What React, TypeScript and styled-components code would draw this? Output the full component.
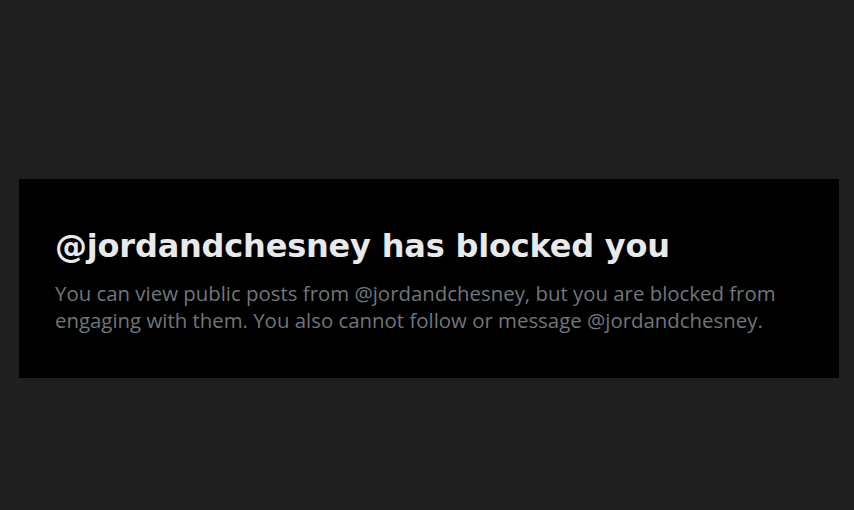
import styled, { createGlobalStyle } from 'styled-components'

const GlobalStyle = createGlobalStyle`
  html, body {
    margin: 0;
    padding: 0;
    background: #1f1f1f;
  }
  body {
    font-family: "Noto Sans", "Open Sans", sans-serif;
  }
`

const Page = styled.div`
  width: 854px;
  height: 510px;
  display: flex;
  align-items: flex-start;
  padding: 179px 15px 0 19px;
  box-sizing: border-box;
`

const Notice = styled.section`
  flex: 1;
  height: 199px;
  background: #000;
  box-sizing: border-box;
  padding: 48px 36px 0 36px;
`

const Title = styled.h2`
  margin: 0;
  font-family: "DejaVu Sans", "Liberation Sans", sans-serif;
  font-weight: 700;
  font-size: 32px;
  line-height: 38px;
  color: #e7e9ea;
  letter-spacing: -0.2px;
`

const Body = styled.p`
  margin: 15px 0 0;
  font-family: "Open Sans", "Noto Sans", sans-serif;
  font-size: 20.4px;
  line-height: 27px;
  color: #71767b;
  max-width: 760px;
`

export default function App() {
  return (
    <>
      <GlobalStyle />
      <Page>
        <Notice>
          <Title>@jordandchesney has blocked you</Title>
          <Body>
            You can view public posts from @jordandchesney, but you are blocked from
            engaging with them. You also cannot follow or message @jordandchesney.
          </Body>
        </Notice>
      </Page>
    </>
  )
}
